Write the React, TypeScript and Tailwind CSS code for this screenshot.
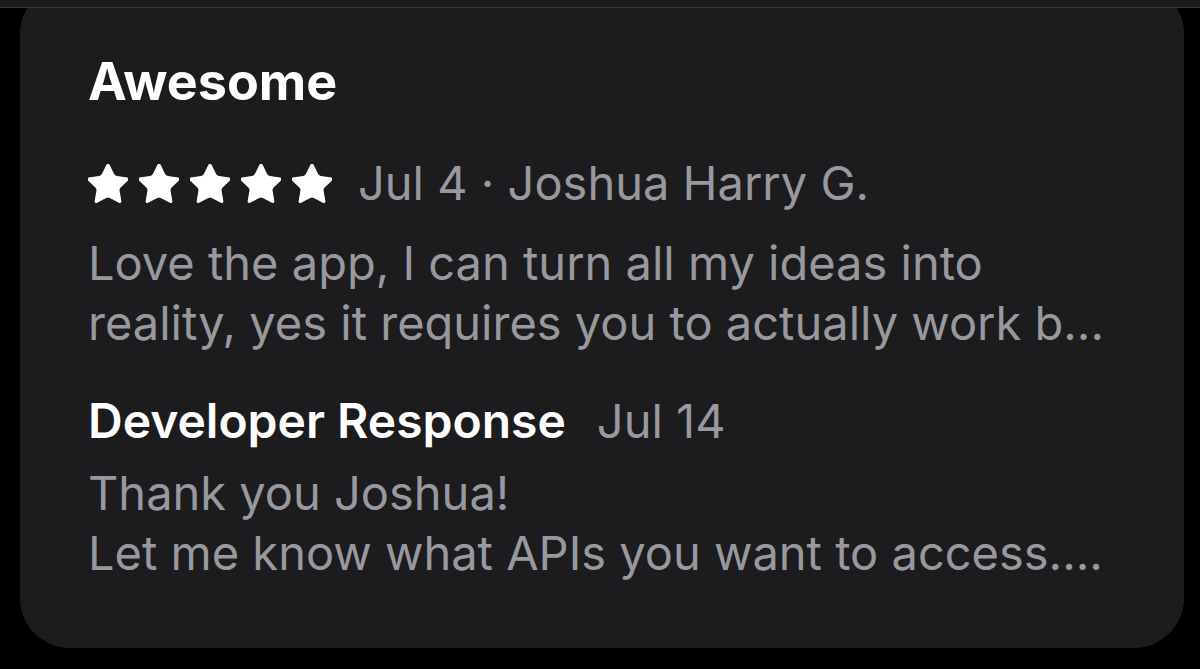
const font = { fontFamily: 'Inter, "Liberation Sans", sans-serif' };

function Star() {
  return (
    <svg viewBox="2 1.9 20 19.4" className="w-[40px] h-[39px] fill-white stroke-white" strokeWidth={0.6} strokeLinejoin="round">
      <path d="M11.525 2.295a.53.53 0 0 1 .95 0l2.31 4.679a2.123 2.123 0 0 0 1.595 1.16l5.166.756a.53.53 0 0 1 .294.904l-3.736 3.638a2.123 2.123 0 0 0-.611 1.878l.882 5.14a.53.53 0 0 1-.771.56l-4.618-2.428a2.122 2.122 0 0 0-1.973 0L6.396 21.01a.53.53 0 0 1-.77-.56l.881-5.139a2.122 2.122 0 0 0-.611-1.879L2.16 9.795a.53.53 0 0 1 .294-.906l5.165-.755a2.122 2.122 0 0 0 1.597-1.16z" />
    </svg>
  );
}

export default function App() {
  return (
    <div className="w-[1200px] h-[669px] bg-black overflow-hidden" style={font}>
      <div className="relative z-10 h-[8px] bg-[#1c1c1e] border-b border-[#38383a]" />
      <div className="mx-[20px] w-[1164px] -mt-[24px] h-[664px] bg-[#1c1c1e] rounded-[50px] pl-[68px] pt-[68px]">
        <h1 className="text-[52px] leading-[60px] font-bold text-white">Awesome</h1>
        <div className="flex items-center mt-[49px] h-[44px]">
          <div className="flex gap-[11px]">
            <Star />
            <Star />
            <Star />
            <Star />
            <Star />
          </div>
          <span className="ml-[26px] text-[47px] text-[#98989f] whitespace-nowrap">Jul 4 · Joshua Harry G.</span>
        </div>
        <div className="mt-[28px] text-[47px] leading-[60px] text-[#98989f] whitespace-nowrap">
          <div>Love the app, I can turn all my ideas into</div>
          <div>reality, yes it requires you to actually work b...</div>
        </div>
        <div className="flex items-baseline mt-[38px] leading-[60px] whitespace-nowrap">
          <span className="text-[48px] font-semibold text-white">Developer Response</span>
          <span className="ml-[31px] text-[47px] text-[#98989f]">Jul 14</span>
        </div>
        <div className="mt-[12px] text-[47px] leading-[60px] text-[#98989f] whitespace-nowrap">
          <div>Thank you Joshua!</div>
          <div>Let me know what APIs you want to access....</div>
        </div>
      </div>
    </div>
  );
}
